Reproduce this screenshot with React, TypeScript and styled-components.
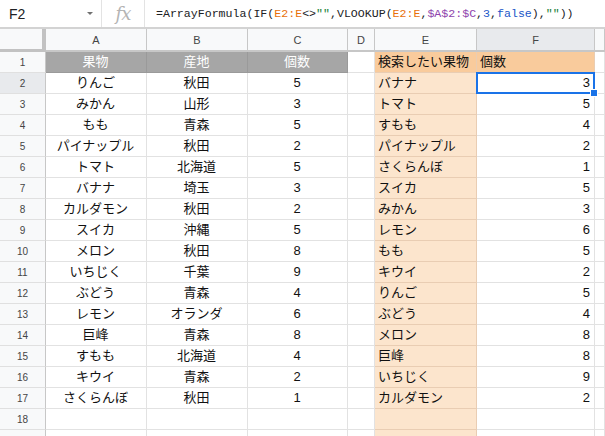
import React from "react";
import styled, { createGlobalStyle, css } from "styled-components";

const GlobalStyle = createGlobalStyle`
  html, body { margin: 0; padding: 0; background: #fff; overflow: hidden; }
  body { font-family: "Liberation Sans", "Noto Sans CJK JP", Arial, sans-serif; }
`;

const Page = styled.div`
  width: 605px;
  height: 436px;
  overflow: hidden;
  background: #fff;
`;

const FormulaBar = styled.div`
  display: flex;
  align-items: stretch;
  height: 27px;
  border-bottom: 2px solid #d3d3d3;
  background: #fff;
`;

const NameBox = styled.div`
  width: 102px;
  display: flex;
  align-items: center;
  justify-content: space-between;
  padding: 0 8px 0 9px;
  box-sizing: border-box;
  border-right: 1px solid #e3e3e3;
  font-size: 14px;
  color: #202124;
`;

const Caret = styled.span`
  width: 0;
  height: 0;
  border-left: 3px solid transparent;
  border-right: 3px solid transparent;
  border-top: 3px solid #707070;
`;

const FxBox = styled.div`
  width: 42px;
  display: flex;
  align-items: center;
  justify-content: center;
  border-right: 1px solid #e3e3e3;
  font-family: "DejaVu Serif", "Liberation Serif", serif;
  font-style: italic;
  font-size: 18px;
  color: #b4b4b4;
  letter-spacing: -1px;
`;

const FormulaText = styled.div`
  display: flex;
  align-items: center;
  padding-left: 11px;
  font-family: "Liberation Mono", "DejaVu Sans Mono", monospace;
  font-size: 11.6px;
  color: #202124;
  white-space: pre;
`;

const Tok = styled.span<{ $c: string }>`
  color: ${(p) => p.$c};
`;

const Grid = styled.div`
  display: grid;
  grid-template-columns: 46px 101px 101px 100px 27px 102px 118px 1fr;
  grid-template-rows: 23px;
  grid-auto-rows: 21px;
`;

const headerBase = css`
  box-sizing: border-box;
  display: flex;
  align-items: center;
  justify-content: center;
  border-right: 1px solid #c7c7c7;
  border-bottom: 1px solid #c7c7c7;
  color: #454545;
  font-family: "Liberation Sans", Arial, sans-serif;
`;

const Corner = styled.div`
  ${headerBase};
  background: #f8f9fa;
  border-right: 4px solid #c2c2c2;
  border-bottom: 3px solid #c2c2c2;
`;

const ColHeader = styled.div<{ $active?: boolean }>`
  ${headerBase};
  font-size: 11px;
  background: ${(p) => (p.$active ? "#e8eaed" : "#f8f9fa")};
  border-bottom-width: 2px;
`;

const RowHeader = styled.div<{ $active?: boolean }>`
  ${headerBase};
  font-size: 10px;
  border-bottom-color: #e0e0e0;
  background: ${(p) => (p.$active ? "#e8eaed" : "#f8f9fa")};
`;

const Cell = styled.div<{
  $bg?: string;
  $align?: "left" | "center" | "right";
  $color?: string;
  $line?: string;
  $selected?: boolean;
}>`
  position: relative;
  box-sizing: border-box;
  display: flex;
  align-items: center;
  justify-content: ${(p) =>
    p.$align === "center" ? "center" : p.$align === "right" ? "flex-end" : "flex-start"};
  padding: 0 4px 0 3px;
  font-size: 13px;
  line-height: 20px;
  white-space: nowrap;
  overflow: visible;
  color: ${(p) => p.$color || "#111"};
  background: ${(p) => p.$bg || "#fff"};
  border-right: 1px solid ${(p) => p.$line || "#e2e2e2"};
  border-bottom: 1px solid ${(p) => p.$line || "#e2e2e2"};
  ${(p) =>
    p.$selected &&
    css`
      &::after {
        content: "";
        position: absolute;
        left: -1px;
        top: -1px;
        right: -1px;
        bottom: -1px;
        border: 2px solid #1a73e8;
        pointer-events: none;
      }
      &::before {
        content: "";
        position: absolute;
        right: -4px;
        bottom: -4px;
        width: 6px;
        height: 6px;
        background: #1a73e8;
        border: 1px solid #fff;
        z-index: 2;
      }
    `}
`;

const left: [string, string, number][] = [
  ["りんご", "秋田", 5],
  ["みかん", "山形", 3],
  ["もも", "青森", 5],
  ["パイナップル", "秋田", 2],
  ["トマト", "北海道", 5],
  ["バナナ", "埼玉", 3],
  ["カルダモン", "秋田", 2],
  ["スイカ", "沖縄", 5],
  ["メロン", "秋田", 8],
  ["いちじく", "千葉", 9],
  ["ぶどう", "青森", 4],
  ["レモン", "オランダ", 6],
  ["巨峰", "青森", 8],
  ["すもも", "北海道", 4],
  ["キウイ", "青森", 2],
  ["さくらんぼ", "秋田", 1],
];

const right: [string, number][] = [
  ["バナナ", 3],
  ["トマト", 5],
  ["すもも", 4],
  ["パイナップル", 2],
  ["さくらんぼ", 1],
  ["スイカ", 5],
  ["みかん", 3],
  ["レモン", 6],
  ["もも", 5],
  ["キウイ", 2],
  ["りんご", 5],
  ["ぶどう", 4],
  ["メロン", 8],
  ["巨峰", 8],
  ["いちじく", 9],
  ["カルダモン", 2],
];

const GREY = "#a6a6a6";
const GREY_LINE = "#9a9a9a";
const ORANGE_DARK = "#f9cb9c";
const ORANGE_LIGHT = "#fce5cd";
const ORANGE_LINE = "#e9cdb3";

export default function App() {
  const cols = ["A", "B", "C", "D", "E", "F", ""];
  const rows: React.ReactNode[] = [];

  rows.push(
    <React.Fragment key="r1">
      <RowHeader>1</RowHeader>
      <Cell $bg={GREY} $color="#fff" $align="center" $line={GREY_LINE}>果物</Cell>
      <Cell $bg={GREY} $color="#fff" $align="center" $line={GREY_LINE}>産地</Cell>
      <Cell $bg={GREY} $color="#fff" $align="center" $line={GREY_LINE}>個数</Cell>
      <Cell />
      <Cell $bg={ORANGE_DARK} $line={ORANGE_LINE}>検索したい果物</Cell>
      <Cell $bg={ORANGE_DARK} $line={ORANGE_LINE}>個数</Cell>
      <Cell />
    </React.Fragment>
  );

  for (let i = 0; i < 18; i++) {
    const rowNum = i + 2;
    const l = left[i];
    const r = right[i];
    rows.push(
      <React.Fragment key={"r" + rowNum}>
        <RowHeader $active={rowNum === 2}>{rowNum <= 18 ? rowNum : ""}</RowHeader>
        <Cell $align="center">{l ? l[0] : ""}</Cell>
        <Cell $align="center">{l ? l[1] : ""}</Cell>
        <Cell $align="center">{l ? l[2] : ""}</Cell>
        <Cell />
        <Cell $bg={ORANGE_LIGHT} $line={ORANGE_LINE}>{r ? r[0] : ""}</Cell>
        <Cell $align="right" $selected={rowNum === 2}>{r ? r[1] : ""}</Cell>
        <Cell />
      </React.Fragment>
    );
  }

  return (
    <Page>
      <GlobalStyle />
      <FormulaBar>
        <NameBox>
          F2
          <Caret />
        </NameBox>
        <FxBox>fx</FxBox>
        <FormulaText>
          =ArrayFormula(IF(<Tok $c="#e8710a">E2:E</Tok>&lt;&gt;<Tok $c="#188038">""</Tok>,VLOOKUP(
          <Tok $c="#e8710a">E2:E</Tok>,<Tok $c="#8e44ad">$A$2:$C</Tok>,<Tok $c="#1a56c8">3</Tok>,
          <Tok $c="#1a56c8">false</Tok>),<Tok $c="#188038">""</Tok>))
        </FormulaText>
      </FormulaBar>
      <Grid>
        <Corner />
        {cols.map((c, i) => (
          <ColHeader key={"h" + i} $active={c === "F"}>
            {c}
          </ColHeader>
        ))}
        {rows}
      </Grid>
    </Page>
  );
}
